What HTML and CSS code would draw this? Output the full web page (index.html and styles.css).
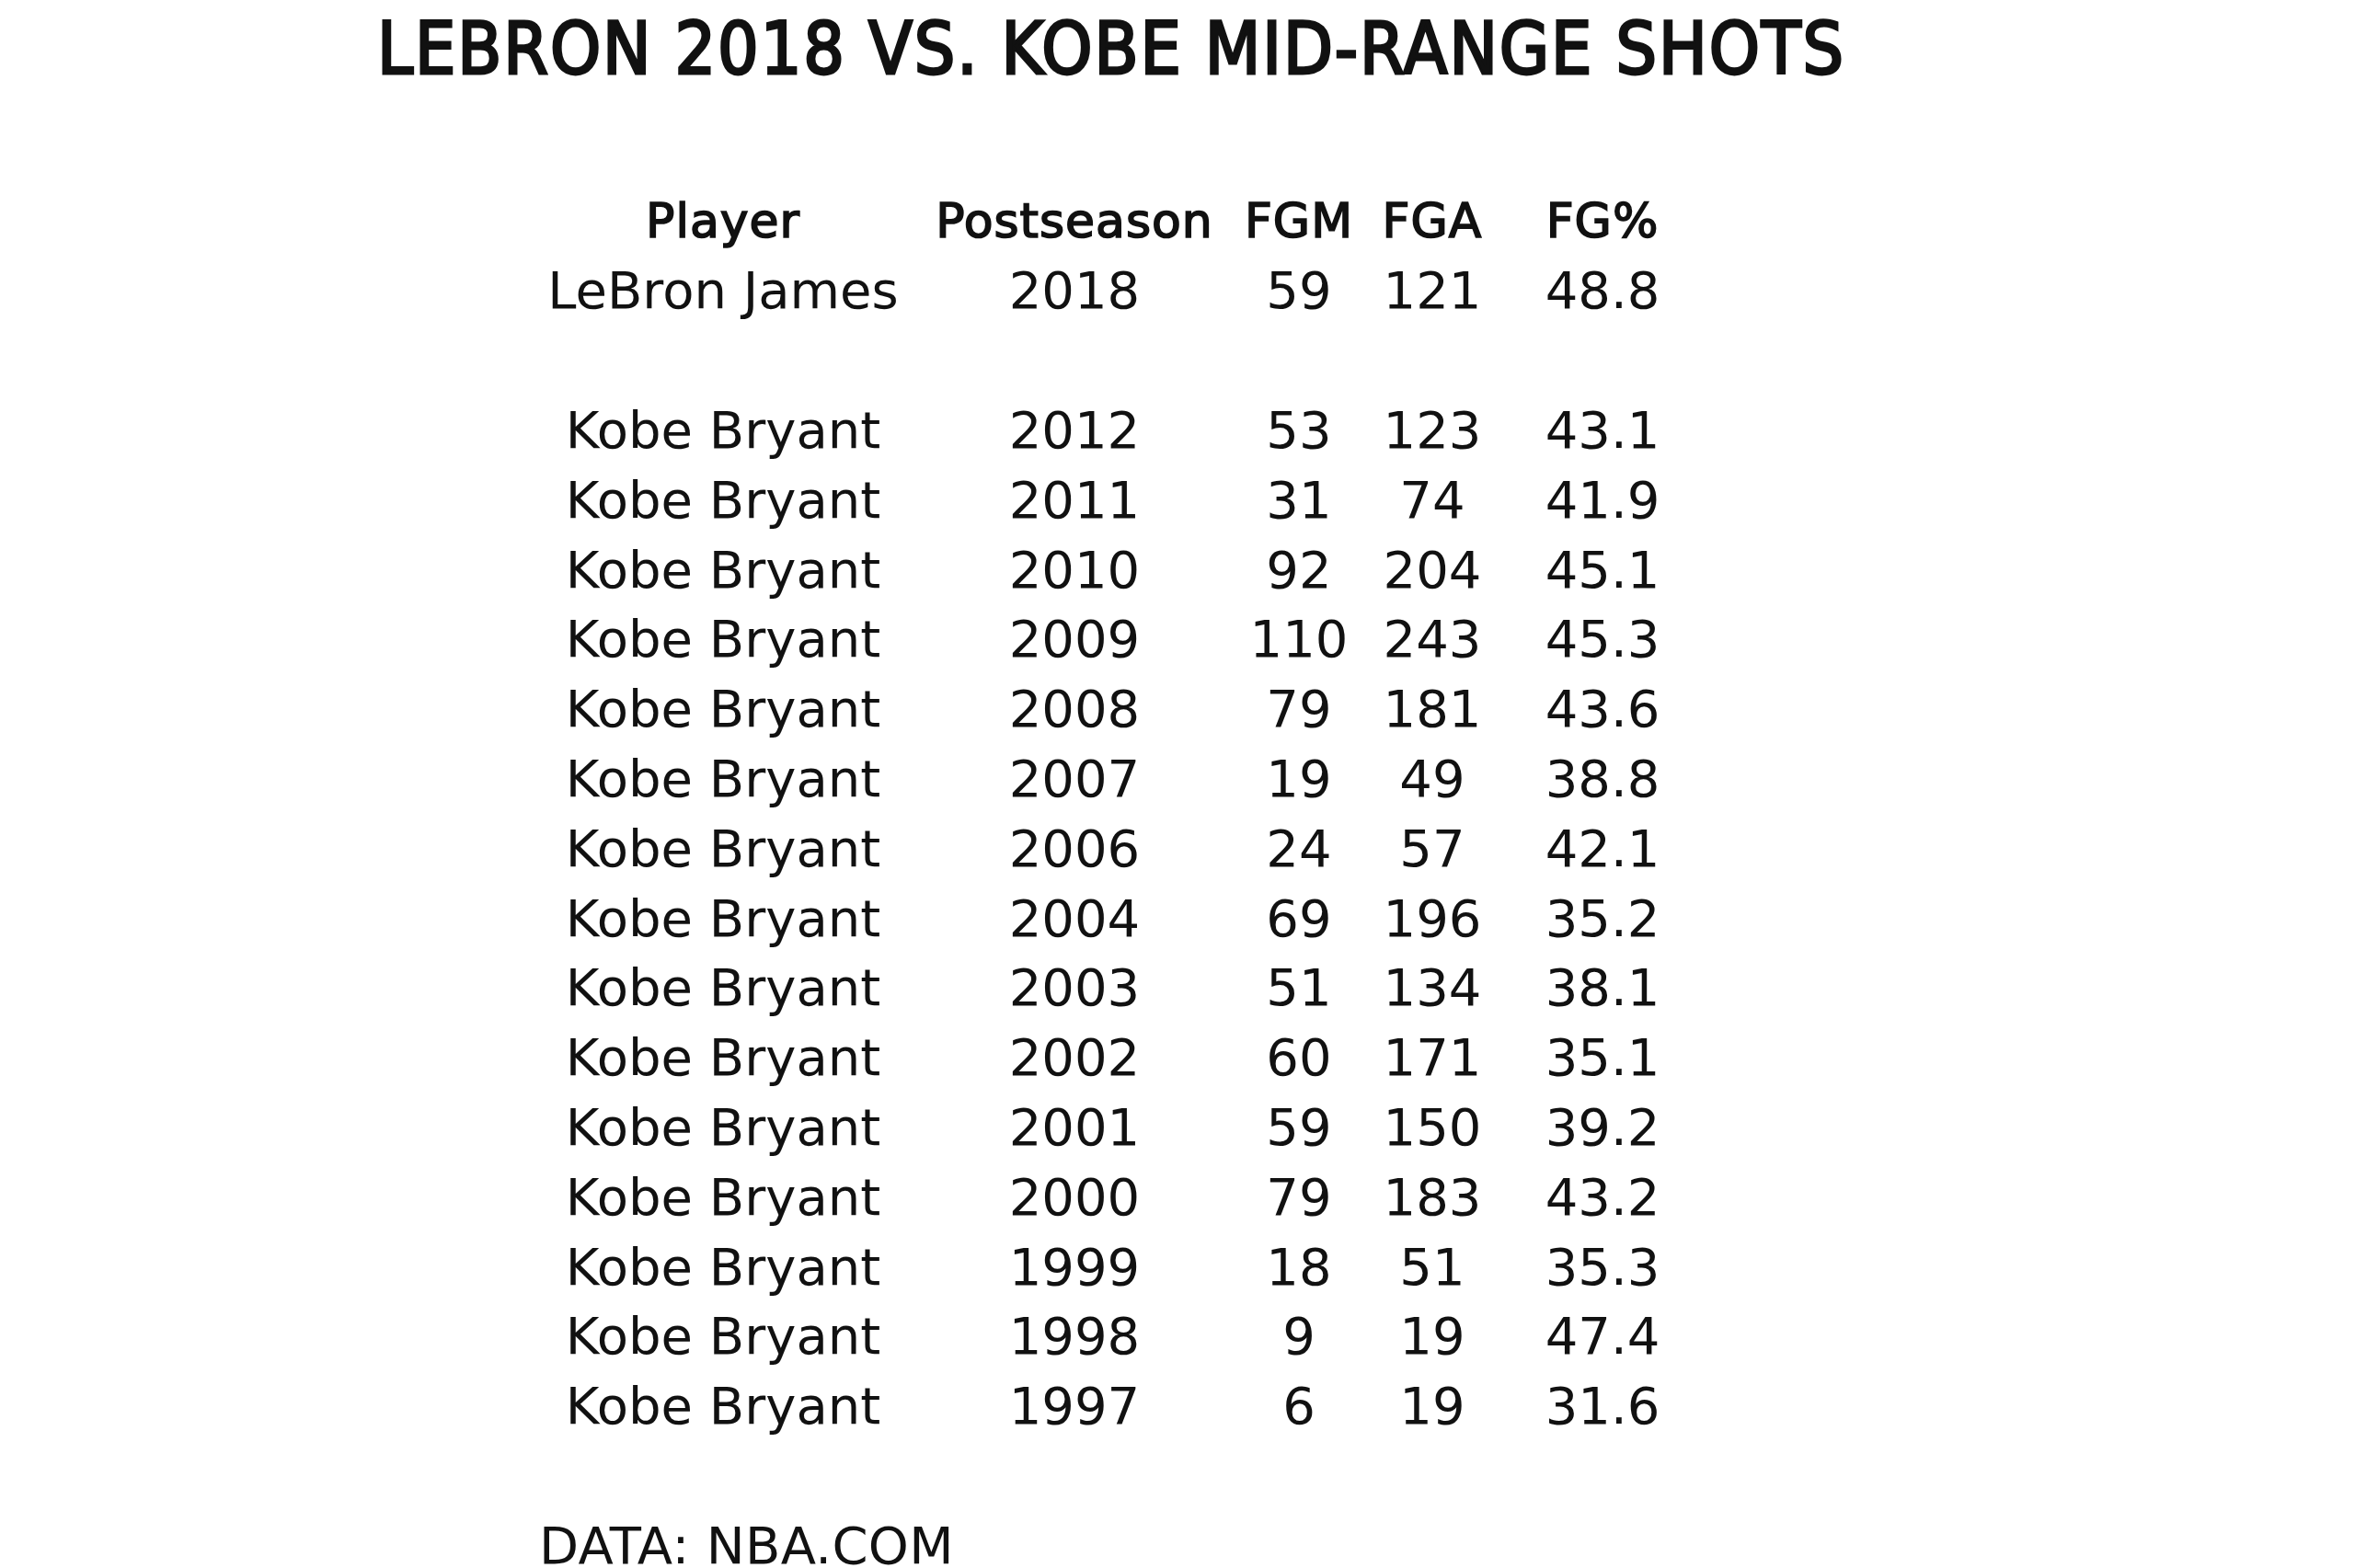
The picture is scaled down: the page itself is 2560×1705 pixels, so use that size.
FILE: index.html
```html
<!DOCTYPE html>
<html lang="en">
<head>
<meta charset="utf-8">
<title>LeBron 2018 vs. Kobe Mid-Range Shots</title>
<link rel="stylesheet" href="styles.css">
</head>
<body>
<main class="page">
  <h1 class="title">LEBRON 2018 VS. KOBE MID-RANGE SHOTS</h1>
  <section class="stats">
    <div class="grid">
      <div class="cell head">Player</div>
      <div class="cell head">Postseason</div>
      <div class="cell head">FGM</div>
      <div class="cell head">FGA</div>
      <div class="cell head">FG%</div>

      <div class="cell">LeBron James</div><div class="cell">2018</div><div class="cell">59</div><div class="cell">121</div><div class="cell">48.8</div>

      <div class="spacer"></div>

      <div class="cell">Kobe Bryant</div><div class="cell">2012</div><div class="cell">53</div><div class="cell">123</div><div class="cell">43.1</div>
      <div class="cell">Kobe Bryant</div><div class="cell">2011</div><div class="cell">31</div><div class="cell">74</div><div class="cell">41.9</div>
      <div class="cell">Kobe Bryant</div><div class="cell">2010</div><div class="cell">92</div><div class="cell">204</div><div class="cell">45.1</div>
      <div class="cell">Kobe Bryant</div><div class="cell">2009</div><div class="cell">110</div><div class="cell">243</div><div class="cell">45.3</div>
      <div class="cell">Kobe Bryant</div><div class="cell">2008</div><div class="cell">79</div><div class="cell">181</div><div class="cell">43.6</div>
      <div class="cell">Kobe Bryant</div><div class="cell">2007</div><div class="cell">19</div><div class="cell">49</div><div class="cell">38.8</div>
      <div class="cell">Kobe Bryant</div><div class="cell">2006</div><div class="cell">24</div><div class="cell">57</div><div class="cell">42.1</div>
      <div class="cell">Kobe Bryant</div><div class="cell">2004</div><div class="cell">69</div><div class="cell">196</div><div class="cell">35.2</div>
      <div class="cell">Kobe Bryant</div><div class="cell">2003</div><div class="cell">51</div><div class="cell">134</div><div class="cell">38.1</div>
      <div class="cell">Kobe Bryant</div><div class="cell">2002</div><div class="cell">60</div><div class="cell">171</div><div class="cell">35.1</div>
      <div class="cell">Kobe Bryant</div><div class="cell">2001</div><div class="cell">59</div><div class="cell">150</div><div class="cell">39.2</div>
      <div class="cell">Kobe Bryant</div><div class="cell">2000</div><div class="cell">79</div><div class="cell">183</div><div class="cell">43.2</div>
      <div class="cell">Kobe Bryant</div><div class="cell">1999</div><div class="cell">18</div><div class="cell">51</div><div class="cell">35.3</div>
      <div class="cell">Kobe Bryant</div><div class="cell">1998</div><div class="cell">9</div><div class="cell">19</div><div class="cell">47.4</div>
      <div class="cell">Kobe Bryant</div><div class="cell">1997</div><div class="cell">6</div><div class="cell">19</div><div class="cell">31.6</div>
    </div>
    <p class="source">DATA: NBA.COM</p>
  </section>
</main>
</body>
</html>
```

FILE: styles.css
```css
html, body {
  margin: 0;
  padding: 0;
  background: #ffffff;
}

body {
  width: 2560px;
  height: 1705px;
  overflow: hidden;
  color: #111111;
  font-family: "DejaVu Sans", "Noto Sans", sans-serif;
}

.page {
  display: flex;
  flex-direction: column;
}

.title {
  margin: 14px 0 0 410px;
  font-family: "DejaVu Sans Condensed", "DejaVu Sans", sans-serif;
  font-stretch: condensed;
  font-weight: normal;
  font-size: 78px;
  line-height: 78px;
  letter-spacing: 1.9px;
  -webkit-text-stroke: 2.8px #111111;
  white-space: nowrap;
}

.stats {
  margin: 110.7px 0 0 586px;
}

.grid {
  display: grid;
  grid-template-columns: 400px 364px 124px 166px 204px;
  grid-auto-rows: 75.8px;
}

.cell {
  text-align: center;
  font-size: 56px;
  line-height: 75.8px;
  white-space: nowrap;
}

.cell.head {
  font-size: 52px;
  letter-spacing: 1px;
  -webkit-text-stroke: 1.7px #111111;
}

.spacer {
  grid-column: 1 / -1;
}

.source {
  margin: 89.6px 0 0 0;
  font-size: 56px;
  line-height: 48px;
  letter-spacing: 0.3px;
  white-space: nowrap;
}
```
